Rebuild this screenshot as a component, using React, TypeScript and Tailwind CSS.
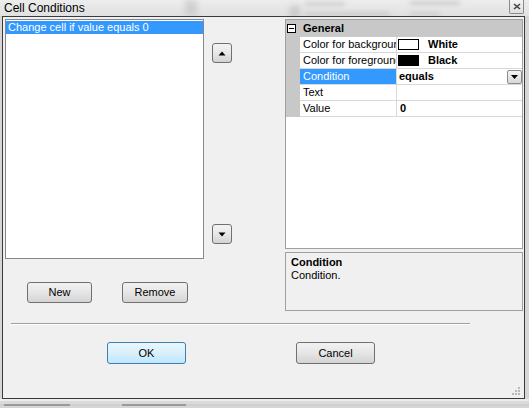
import React from "react";

function Tri({ down }: { down?: boolean }) {
  return (
    <svg width="8" height="5" viewBox="0 0 8 5">
      {down ? <polygon points="0.5,0.5 7.5,0.5 4,4.5" fill="#000" /> : <polygon points="0.5,4.5 7.5,4.5 4,0.5" fill="#000" />}
    </svg>
  );
}

function ArrowBtn({ down }: { down?: boolean }) {
  return (
    <div className="w-[20px] h-[20px] rounded-[3px] border border-[#707070] bg-gradient-to-b from-[#f3f3f3] via-[#e8e8e8] to-[#d2d2d2] flex items-center justify-center">
      <Tri down={down} />
    </div>
  );
}

function WinBtn({ label, w, primary }: { label: string; w: string; primary?: boolean }) {
  return (
    <div
      className={
        "h-[21px] rounded-[3px] border flex items-center justify-center text-[11px] " +
        w +
        (primary
          ? " border-[#3c7fb1] bg-gradient-to-b from-[#eaf6fd] via-[#d9f0fc] to-[#bee6fd] h-[22px]"
          : " border-[#707070] bg-gradient-to-b from-[#f2f2f2] via-[#e6e6e6] to-[#d3d3d3]")
      }
    >
      {label}
    </div>
  );
}

function Row({ name, selected, children }: { name: string; selected?: boolean; children?: React.ReactNode }) {
  return (
    <div className="flex h-[16px]">
      <div className="w-[14px] bg-[#c8c8c8]" />
      <div
        className={
          "w-[96px] pl-[3px] leading-[15px] whitespace-nowrap overflow-hidden border-b border-[#d8d8d8] " +
          (selected ? "bg-[#3399ff] text-white" : "bg-white")
        }
      >
        {name}
      </div>
      <div className="flex-1 border-l border-b border-[#d8d8d8] bg-white flex items-center relative">{children}</div>
    </div>
  );
}

export default function App() {
  return (
    <div className="relative w-[529px] h-[408px] overflow-hidden bg-[#d6d6d6] font-['Liberation_Sans',Arial,sans-serif] text-[11px] text-black">
      {/* title bar */}
      <div className="relative h-[16px] bg-gradient-to-b from-[#ededed] to-[#e0e0e0] flex items-start overflow-hidden">
        <div className="absolute left-[185px] top-0 w-[12px] h-[16px] bg-[#c4c4c4] blur-[3px] opacity-70" />
        <div className="absolute left-[290px] top-[6px] w-[10px] h-[12px] bg-[#bdbdbd] blur-[3px] opacity-70" />
        <div className="absolute left-[305px] top-[2px] w-[40px] h-[4px] bg-[#c0c0c0] blur-[2px] opacity-60" />
        <div className="absolute left-[305px] top-[12px] w-[85px] h-[4px] bg-[#bcbcbc] blur-[2px] opacity-60" />
        <div className="absolute left-[410px] top-[1px] w-[50px] h-[4px] bg-[#bcbcbc] blur-[2px] opacity-60" />
        <div className="absolute left-[410px] top-[12px] w-[30px] h-[4px] bg-[#c0c0c0] blur-[2px] opacity-60" />
        <span className="relative ml-[4px] mt-[1px] text-[12px] leading-[14px] text-black">Cell Conditions</span>
        <div className="relative ml-auto mr-[5px] w-[15px] h-[14px] rounded-b-[2px] border border-t-0 border-[#8a8a8a] bg-gradient-to-b from-[#f4f4f4] to-[#dedede] flex items-center justify-center">
          <svg width="8" height="7" viewBox="0 0 8 7">
            <path d="M1 1 L7 6 M7 1 L1 6" stroke="#444" strokeWidth="1.6" />
          </svg>
        </div>
      </div>

      {/* window */}
      <div className="relative ml-[2px] w-[523px] h-[383px] border border-[#3a3a3a] bg-[#f0f0f0]">
        <div className="flex h-[294px] pt-[2px] items-start">
          {/* left column */}
          <div className="ml-[2px] w-[199px] flex flex-col">
            <div className="h-[240px] border border-[#828790] bg-white pt-[1px]">
              <div className="h-[13px] bg-[#3399ff] text-white leading-[13px] pl-[2px] mr-[0px] whitespace-nowrap">
                Change cell if value equals 0
              </div>
            </div>
            <div className="flex mt-[23px]">
              <div className="ml-[22px]">
                <WinBtn label="New" w="w-[65px]" />
              </div>
              <div className="ml-[30px]">
                <WinBtn label="Remove" w="w-[66px]" />
              </div>
            </div>
          </div>

          {/* arrows */}
          <div className="ml-[8px] mt-[24px] flex flex-col">
            <ArrowBtn />
            <div className="h-[161px]" />
            <ArrowBtn down />
          </div>

          {/* property grid */}
          <div className="ml-[53px] w-[238px] flex flex-col">
            <div className="h-[230px] border border-[#a0a0a0] bg-white flex flex-col">
              <div className="h-[17px] bg-[#c8c8c8] flex items-center">
                <div className="ml-[1px] w-[9px] h-[9px] border border-black bg-white flex items-center justify-center">
                  <div className="w-[5px] h-[1px] bg-black" />
                </div>
                <span className="ml-[7px] font-bold leading-[15px]">General</span>
              </div>
              <Row name="Color for background">
                <div className="ml-[1px] w-[21px] h-[11px] border border-black bg-white" />
                <span className="ml-[9px] font-bold">White</span>
              </Row>
              <Row name="Color for foreground">
                <div className="ml-[1px] w-[21px] h-[11px] border border-black bg-black" />
                <span className="ml-[9px] font-bold">Black</span>
              </Row>
              <Row name="Condition" selected>
                <span className="ml-[2px] font-bold">equals</span>
                <div className="ml-auto mr-[0px] w-[15px] h-[14px] border border-[#8a8a8a] rounded-[2px] bg-gradient-to-b from-[#f4f4f4] to-[#d8d8d8] flex items-center justify-center">
                  <svg width="7" height="4" viewBox="0 0 7 4">
                    <polygon points="0,0 7,0 3.5,4" fill="#000" />
                  </svg>
                </div>
              </Row>
              <Row name="Text" />
              <Row name="Value">
                <span className="ml-[3px] font-bold">0</span>
              </Row>
              <div className="flex-1 bg-white" />
            </div>
            <div className="mt-[3px] h-[59px] border border-[#a0a0a0] bg-[#f0f0f0] pl-[5px] pt-[3px] leading-[13px]">
              <div className="font-bold">Condition</div>
              <div>Condition.</div>
            </div>
          </div>
        </div>

        {/* separator */}
        <div className="mt-[12px] ml-[8px] w-[459px] h-[2px] border-t border-[#a0a0a0] border-b border-b-white" />

        {/* OK / Cancel */}
        <div className="flex mt-[17px]">
          <div className="ml-[104px]">
            <WinBtn label="OK" w="w-[79px]" primary />
          </div>
          <div className="ml-[110px]">
            <div className="h-[22px] w-[79px] rounded-[3px] border border-[#707070] bg-gradient-to-b from-[#f2f2f2] via-[#e6e6e6] to-[#d3d3d3] flex items-center justify-center">
              Cancel
            </div>
          </div>
        </div>

        {/* resize grip */}
        <svg className="absolute right-[3px] bottom-[2px]" width="9" height="9" viewBox="0 0 9 9">
          <rect x="6" y="0" width="2" height="2" fill="#b8b8b8" />
          <rect x="3" y="3" width="2" height="2" fill="#b8b8b8" />
          <rect x="6" y="3" width="2" height="2" fill="#b8b8b8" />
          <rect x="0" y="6" width="2" height="2" fill="#b8b8b8" />
          <rect x="3" y="6" width="2" height="2" fill="#b8b8b8" />
          <rect x="6" y="6" width="2" height="2" fill="#b8b8b8" />
        </svg>
      </div>

      {/* below window */}
      <div className="h-[2px] bg-[#ececec]" />
      <div className="h-[3px] bg-[#dadada]" />
      <div className="flex h-[2px] bg-[#cfcfcf]">
        <div className="ml-[4px] w-[66px] bg-[#9a9a9a]" />
        <div className="ml-[52px] w-[64px] bg-[#9a9a9a]" />
      </div>
    </div>
  );
}
